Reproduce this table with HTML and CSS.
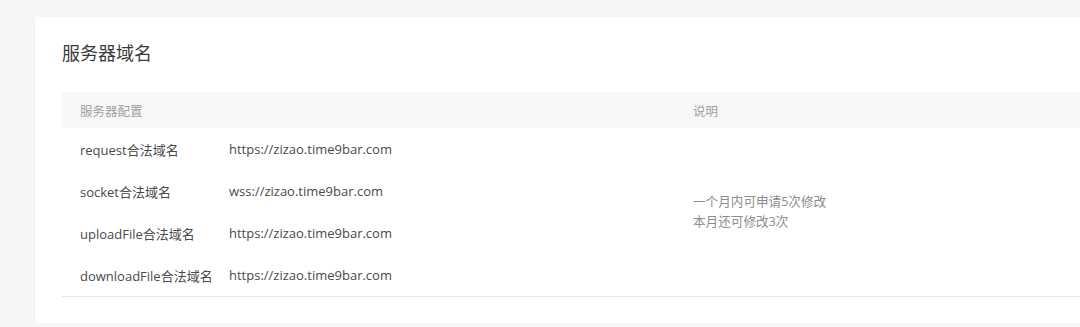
FILE: index.html
```html
<!DOCTYPE html>
<html lang="zh-CN">
<head>
    <meta charset="UTF-8">
    <title>服务器域名</title>
    <link rel="stylesheet" href="styles.css">
</head>
<body>
    <div class="page">
        <div class="card">
            <h2 class="card-title">服务器域名</h2>
            <div class="domain-table">
                <div class="table-head">
                    <div class="head-cell head-config">服务器配置</div>
                    <div class="head-cell head-desc">说明</div>
                </div>
                <div class="table-body">
                    <div class="config-list">
                        <div class="config-row">
                            <span class="config-label">request合法域名</span>
                            <span class="config-value">https://zizao.time9bar.com</span>
                        </div>
                        <div class="config-row">
                            <span class="config-label">socket合法域名</span>
                            <span class="config-value">wss://zizao.time9bar.com</span>
                        </div>
                        <div class="config-row">
                            <span class="config-label">uploadFile合法域名</span>
                            <span class="config-value">https://zizao.time9bar.com</span>
                        </div>
                        <div class="config-row">
                            <span class="config-label">downloadFile合法域名</span>
                            <span class="config-value">https://zizao.time9bar.com</span>
                        </div>
                    </div>
                    <div class="desc-cell">
                        <p>一个月内可申请5次修改</p>
                        <p>本月还可修改3次</p>
                    </div>
                </div>
            </div>
        </div>
    </div>
</body>
</html>
```

FILE: styles.css
```css
html, body {
    margin: 0;
    padding: 0;
    background-color: #f6f6f6;
    overflow: hidden;
}
body {
    font-family: "Open Sans", "Noto Sans CJK SC", sans-serif;
    color: #353535;
}
.page {
    padding: 17px 0 0 35px;
}
.card {
    height: 306px;
    box-sizing: border-box;
    background-color: #fff;
    padding: 0 0 0 27px;
    box-shadow: 0 1px 2px rgba(0,0,0,0.05);
}
.card-title {
    margin: 0;
    padding: 23px 0 0 0;
    height: 52px;
    font-size: 18px;
    font-weight: normal;
    line-height: 26px;
    color: #3a3a3a;
}
.domain-table {
    border-bottom: 1px solid #e7e7e7;
}
.table-head {
    display: flex;
    height: 36px;
    align-items: center;
    background-color: #f7f7f7;
    font-size: 12.5px;
    color: #a0a0a0;
}
.head-cell {
    padding-left: 18px;
}
.head-config {
    width: 595px;
}
.table-body {
    display: flex;
}
.config-list {
    width: 613px;
}
.config-row {
    display: flex;
    align-items: center;
    height: 42px;
    padding-left: 18px;
    font-size: 13px;
    color: #4a4a4a;
}
.config-label {
    width: 149px;
    flex-shrink: 0;
}
.desc-cell {
    display: flex;
    flex-direction: column;
    justify-content: center;
    padding-left: 18px;
    font-size: 12.6px;
    line-height: 20px;
    color: #8c8c8c;
}
.desc-cell p {
    margin: 0;
}
```
